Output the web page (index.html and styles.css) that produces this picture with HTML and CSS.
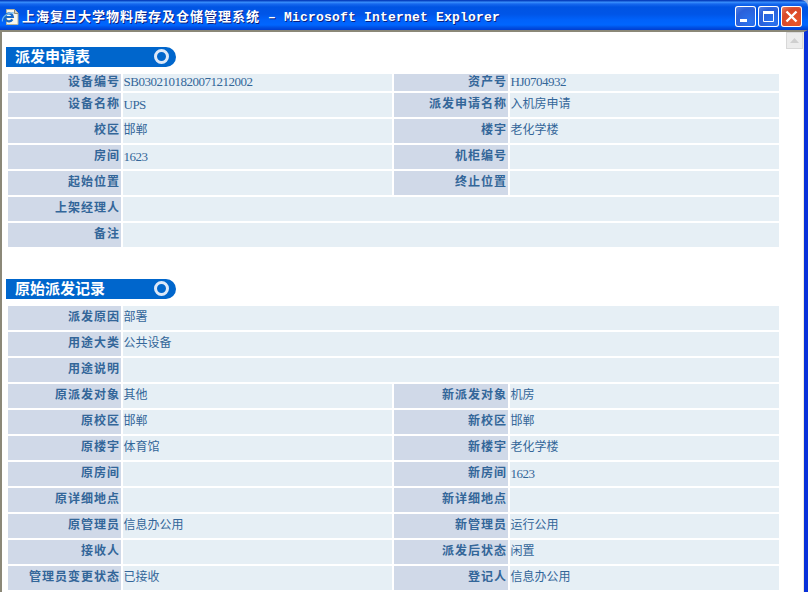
FILE: index.html
```html
<!DOCTYPE html>
<html lang="zh-CN">
<head>
<meta charset="utf-8">
<title>上海复旦大学物料库存及仓储管理系统</title>
<link rel="stylesheet" href="styles.css">
</head>
<body>
<div class="window">
  <header class="titlebar">
    <svg class="page-icon" width="16" height="16" viewBox="0 0 16 16">
      <path d="M3.500 .5h8l3.500 3.500v11.500H3.500z" fill="#f8f7ee" stroke="#b9b59d"/>
      <path d="M11.500 .5v4h3.500" fill="#d6d2bd" stroke="#8f8b76"/>
      <path d="M9.400 10.400A4 4 0 1 1 9.900 8H3" fill="none" stroke="#1769c8" stroke-width="2.200"/>
      <path d="M-.5 12.500C-1.500 8 5 3 11 4" fill="none" stroke="#69b5f2" stroke-width="1.200"/>
    </svg>
    <h1 class="title">上海复旦大学物料库存及仓储管理系统<span class="app"> – Microsoft Internet Explorer</span></h1>
    <div class="controls">
      <svg class="ctl" viewBox="0 0 21 21"><rect x="5" y="13" width="7" height="3" fill="#fff"/></svg>
      <svg class="ctl" viewBox="0 0 21 21"><path d="M5.500 6v9.500h10V6" fill="none" stroke="#fff"/><path d="M5 5h11v3H5z" fill="#fff"/></svg>
      <svg class="ctl close" viewBox="0 0 21 21"><path d="M5.500 5.500l10 10M15.500 5.500l-10 10" stroke="#fff" stroke-width="2.400"/></svg>
    </div>
  </header>
  <div class="frame">
    <main class="content">
      <h2 class="section">派发申请表<i class="ring"></i></h2>
      <dl class="grid first">
        <dt>设备编号</dt><dd class="code">SB0302101820071212002</dd><dt>资产号</dt><dd class="code">HJ0704932</dd>
        <dt>设备名称</dt><dd class="code">UPS</dd><dt>派发申请名称</dt><dd>入机房申请</dd>
        <dt>校区</dt><dd>邯郸</dd><dt>楼宇</dt><dd>老化学楼</dd>
        <dt>房间</dt><dd class="code">1623</dd><dt>机柜编号</dt><dd></dd>
        <dt>起始位置</dt><dd></dd><dt>终止位置</dt><dd></dd>
        <dt>上架经理人</dt><dd class="wide"></dd>
        <dt>备注</dt><dd class="wide"></dd>
      </dl>
      <h2 class="section">原始派发记录<i class="ring"></i></h2>
      <dl class="grid">
        <dt>派发原因</dt><dd class="wide">部署</dd>
        <dt>用途大类</dt><dd class="wide">公共设备</dd>
        <dt>用途说明</dt><dd class="wide"></dd>
        <dt>原派发对象</dt><dd>其他</dd><dt>新派发对象</dt><dd>机房</dd>
        <dt>原校区</dt><dd>邯郸</dd><dt>新校区</dt><dd>邯郸</dd>
        <dt>原楼宇</dt><dd>体育馆</dd><dt>新楼宇</dt><dd>老化学楼</dd>
        <dt>原房间</dt><dd></dd><dt>新房间</dt><dd class="code">1623</dd>
        <dt>原详细地点</dt><dd></dd><dt>新详细地点</dt><dd></dd>
        <dt>原管理员</dt><dd>信息办公用</dd><dt>新管理员</dt><dd>运行公用</dd>
        <dt>接收人</dt><dd></dd><dt>派发后状态</dt><dd>闲置</dd>
        <dt>管理员变更状态</dt><dd>已接收</dd><dt>登记人</dt><dd>信息办公用</dd>
      </dl>
    </main>
    <div class="scrollbar"><div class="up"><svg width="9" height="5" viewBox="0 0 9 5"><path d="M0 5L4.500 0 9 5z" fill="#cfcfcf"/></svg></div></div>
  </div>
</div>
</body>
</html>
```
FILE: styles.css
```css
* { box-sizing: border-box; }
body { margin: 0; overflow: hidden; }
.window {
  display: flex; flex-direction: column;
  width: 808px; height: 592px;
  background: #a9b9dc;
  font-family: "Liberation Serif", "Noto Sans CJK SC", serif;
}
.titlebar {
  display: flex; align-items: center;
  height: 30px; flex: none;
  padding: 3px 6px 0 3px;
  border-top-right-radius: 7px;
  background: linear-gradient(#0842c0 0, #0842c0 1px, #3d95ff 2px, #1668ee 4px, #0054e3 7px, #0055e7 14px, #0062fb 20px, #0066ff 25px, #0054e8 27px, #003dd0 30px);
}
.page-icon { flex: none; overflow: visible; }
.title {
  flex: 1; margin: 0 0 0 3px;
  font: bold 13px/20px "Noto Sans CJK SC", sans-serif;
  letter-spacing: 1px; color: #fff; white-space: pre;
  text-shadow: 1px 1px 0 #0a1f80;
}
.app { font-family: "Liberation Mono", monospace; letter-spacing: .2px; }
.controls { display: flex; gap: 2px; }
.ctl {
  width: 21px; height: 21px;
  border-radius: 3px;
  box-shadow: inset 0 0 0 1px #fff;
  background: radial-gradient(circle at 70% 75%, #2a73f0, #2a60da 60%, #5c86e6);
}
.close { background: radial-gradient(circle at 70% 75%, #e8562a, #d8482a 60%, #e98a70); }
.frame {
  display: flex; flex: 1; min-height: 0;
  border: solid; border-width: 2px 4px 0 2px;
  border-color: #8b8878 #0831d9 #000 #8b8878;
  background: #fff;
}
.content { width: 773px; padding: 15px 0 0 4px; }
.section {
  display: flex; align-items: center; justify-content: space-between;
  width: 170px; height: 20px;
  margin: 0; padding: 0 7px 2px 9px;
  border-radius: 0 10px 10px 0;
  background: #0066cc; color: #fff;
  font: bold 15px/18px "Noto Sans CJK SC", sans-serif;
}
.ring { width: 15px; height: 15px; border: 2.5px solid #e3edfa; border-width: 3px; border-color: #dce8f8; border-radius: 50%; }
.grid {
  display: grid;
  grid-template-columns: 113px 269px 114px 269px;
  grid-auto-rows: 24px;
  gap: 2px;
  margin: 7px 0 0 2px;
  font-size: 12px; line-height: 23px; color: #336699;
}
.first { grid-template-rows: 17px; margin-bottom: 32px; }
dt {
  padding-right: 1px;
  background: #d0d9e8;
  text-align: right; font-weight: bold; letter-spacing: 1px;
  white-space: nowrap;
}
dd { margin: 0; background: #e6eff5; white-space: nowrap; }
dd { padding-left: .5px; }
.code { font-size: 13px; letter-spacing: -.5px; }
.first > :nth-child(-n+4) { line-height: 16px; }
.wide { grid-column: span 3; }
.scrollbar { display: flex; justify-content: flex-end; flex: 1; border-right: 1px solid #ece9d8; }
.up {
  display: flex; align-items: center; justify-content: center;
  width: 17px; height: 17px;
  border: 1px solid #d8d8d8;
  background: #ececec;
}
```
